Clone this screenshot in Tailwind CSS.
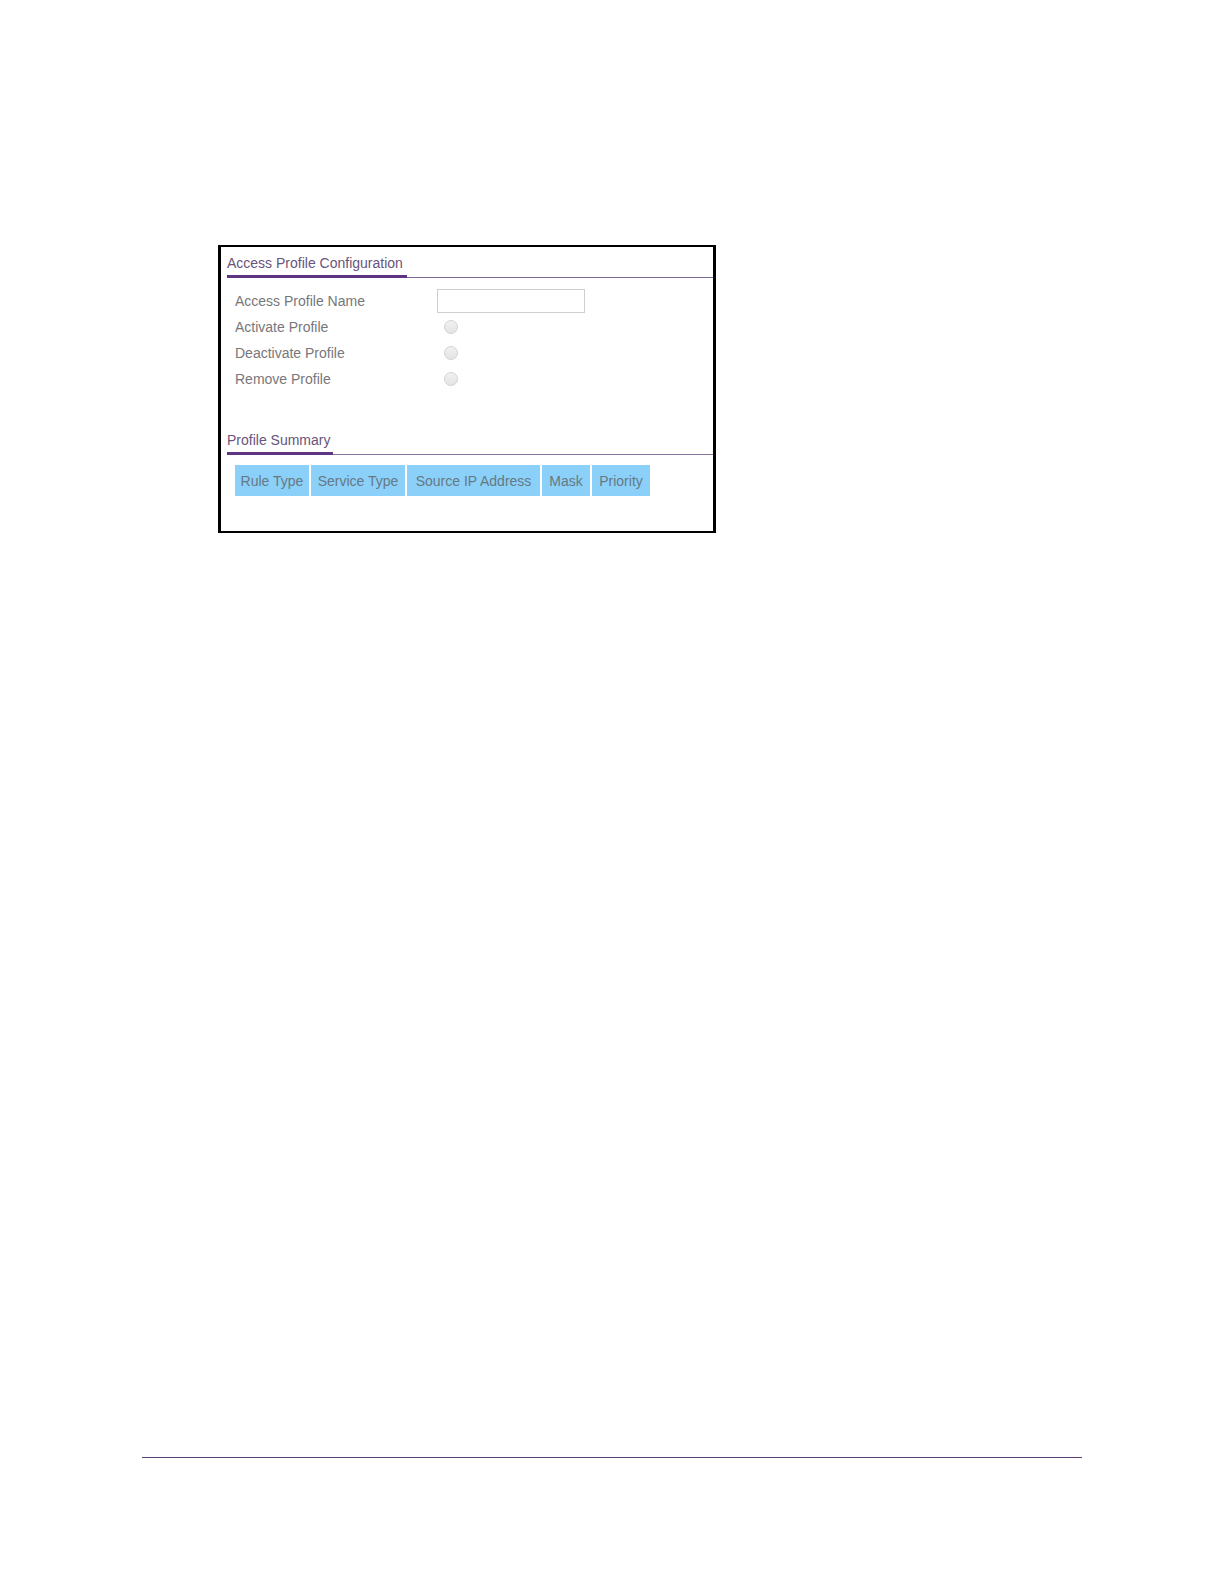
<!DOCTYPE html>
<html lang="en">
<head>
  <meta charset="UTF-8" />
  <meta name="viewport" content="width=device-width, initial-scale=1.0"/>
  <title>Access Profile Configuration</title>
  <script src="https://cdn.jsdelivr.net/npm/@tailwindcss/browser@4"></script>
</head>
<body class="min-h-screen flex flex-col bg-white font-['Liberation_Sans',Arial,sans-serif] text-sm text-[#77777a]">

  <main class="flex-1 pt-[245px] px-[142px]">
    <div class="ml-[76px] max-w-[498px] border-x-3 border-y-2 border-black pl-[6px] pb-[35px]">

      <!-- Access Profile Configuration -->
      <section>
        <div class="flex items-end pt-[6px]">
          <h2 class="min-w-[180px] border-b-3 border-[#5f3482] leading-5 pb-[2px] text-[#68547c]">Access Profile Configuration</h2>
          <div class="flex-1 border-b border-[#7d6b95]"></div>
        </div>

        <form class="mt-[10px] pl-[8px]">
          <div class="flex items-center h-[26px]">
            <label for="profile-name" class="w-[202px]">Access Profile Name</label>
            <input id="profile-name" type="text" class="w-[148px] h-[24px] px-1 border border-[#cfcfcf] bg-white">
          </div>
          <div class="flex items-center h-[26px]">
            <label for="activate" class="w-[209px]">Activate Profile</label>
            <input id="activate" type="radio" name="action" class="appearance-none size-[14px] rounded-full border border-[#d2d2d2] bg-gradient-to-b from-[#f1f1f1] to-[#e4e4e4] checked:bg-[#5f3482]">
          </div>
          <div class="flex items-center h-[26px]">
            <label for="deactivate" class="w-[209px]">Deactivate Profile</label>
            <input id="deactivate" type="radio" name="action" class="appearance-none size-[14px] rounded-full border border-[#d2d2d2] bg-gradient-to-b from-[#f1f1f1] to-[#e4e4e4] checked:bg-[#5f3482]">
          </div>
          <div class="flex items-center h-[26px]">
            <label for="remove" class="w-[209px]">Remove Profile</label>
            <input id="remove" type="radio" name="action" class="appearance-none size-[14px] rounded-full border border-[#d2d2d2] bg-gradient-to-b from-[#f1f1f1] to-[#e4e4e4] checked:bg-[#5f3482]">
          </div>
        </form>
      </section>

      <!-- Profile Summary -->
      <section class="mt-[38px]">
        <div class="flex items-end">
          <h2 class="min-w-[106px] border-b-3 border-[#5f3482] leading-5 pb-[2px] text-[#68547c]">Profile Summary</h2>
          <div class="flex-1 border-b border-[#8a74a0]"></div>
        </div>

        <table class="mt-[10px] ml-[6px] border-separate border-spacing-x-[2px] border-spacing-y-0">
          <thead>
            <tr class="h-[31px] bg-[#8bd0f8] text-[#667884]">
              <th class="min-w-[74px] px-[5px] font-normal">Rule Type</th>
              <th class="min-w-[94px] px-[5px] font-normal">Service Type</th>
              <th class="min-w-[133px] px-[5px] font-normal">Source IP Address</th>
              <th class="min-w-[48px] px-[5px] font-normal">Mask</th>
              <th class="min-w-[58px] px-[5px] font-normal">Priority</th>
            </tr>
          </thead>
        </table>
      </section>
    </div>
  </main>

  <footer class="mx-[142px] mb-[126px] border-t border-[#5f3f78]"></footer>

</body>
</html>
